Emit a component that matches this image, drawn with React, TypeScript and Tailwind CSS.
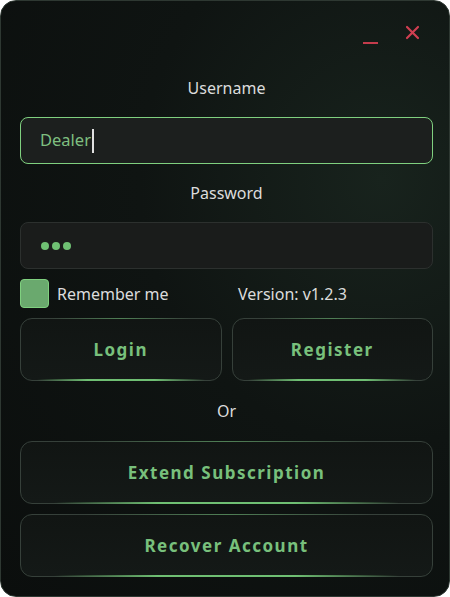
import React from "react";

const font = { fontFamily: '"Noto Sans", "Open Sans", sans-serif' };

function Btn({ label }: { label: string }) {
  return (
    <button className="relative flex h-[63px] w-full items-center justify-center rounded-[12px] border border-[#36403a] bg-[linear-gradient(180deg,#111513_0%,#141917_100%)] text-[17px] font-bold tracking-[1.5px] text-[#78c07c]">
      <span className="pointer-events-none absolute bottom-[-1px] left-[8%] right-[8%] h-[2px] bg-[linear-gradient(90deg,transparent,#6fbf73_30%,#6fbf73_70%,transparent)]" />
      <span className="pointer-events-none absolute top-[-1px] left-[15%] right-[15%] h-px bg-[linear-gradient(90deg,transparent,#4f7f55,transparent)]" />
      {label}
    </button>
  );
}

export default function App() {
  return (
    <div
      style={font}
      className="h-[597px] w-[450px] overflow-hidden rounded-[16px] border border-[#2e3832] bg-[radial-gradient(ellipse_at_85%_30%,#18231d_0%,#0f1412_45%,#0b0e0d_100%)] pl-[19px] pr-[16px] text-[#dcdcdc]"
    >
      <div className="flex h-[60px] items-end justify-end gap-[27px] pr-[13px] pb-[18px]">
        <div className="mb-[-1px] h-[2px] w-[15px] bg-[#c43c4c]" />
        <svg width="15" height="15" viewBox="0 0 15 15" className="mb-[3px]">
          <path d="M2 2 L13 13 M13 2 L2 13" stroke="#cf3f51" strokeWidth="2.2" strokeLinecap="round" />
        </svg>
      </div>
      <div className="flex h-[56px] items-start justify-center pt-[15px] text-[16px] leading-[24px]">Username</div>
      <div className="flex h-[47px] items-center rounded-[8px] border-[1.5px] border-[#7fd07f] bg-[#1c1f1e] pl-[19px] text-[16.5px] text-[#7fbf80]">
        Dealer<span className="ml-[1px] h-[24px] w-[2px] bg-[#e0e0e0]" />
      </div>
      <div className="flex h-[58px] items-center justify-center text-[16px] leading-[24px]">Password</div>
      <div className="flex h-[47px] items-center gap-[3px] rounded-[8px] border border-[#2c302e] bg-[#1a1c1b] pl-[20px]">
        <span className="h-[8px] w-[8px] rounded-full bg-[#6fc073]" />
        <span className="h-[8px] w-[8px] rounded-full bg-[#6fc073]" />
        <span className="h-[8px] w-[8px] rounded-full bg-[#6fc073]" />
      </div>
      <div className="mt-[10px] flex h-[29px] items-center">
        <div className="h-[29px] w-[29px] rounded-[4px] border border-[#7fd07f] bg-[#6aa96e]" />
        <span className="ml-[8px] w-[181px] text-[16px]">Remember me</span>
        <span className="text-[16px]">Version: v1.2.3</span>
      </div>
      <div className="mt-[10px] grid grid-cols-2 gap-[10px]">
        <Btn label="Login" />
        <Btn label="Register" />
      </div>
      <div className="flex h-[60px] items-center justify-center text-[16px]">Or</div>
      <div className="flex flex-col gap-[10px]">
        <Btn label="Extend Subscription" />
        <Btn label="Recover Account" />
      </div>
    </div>
  );
}
